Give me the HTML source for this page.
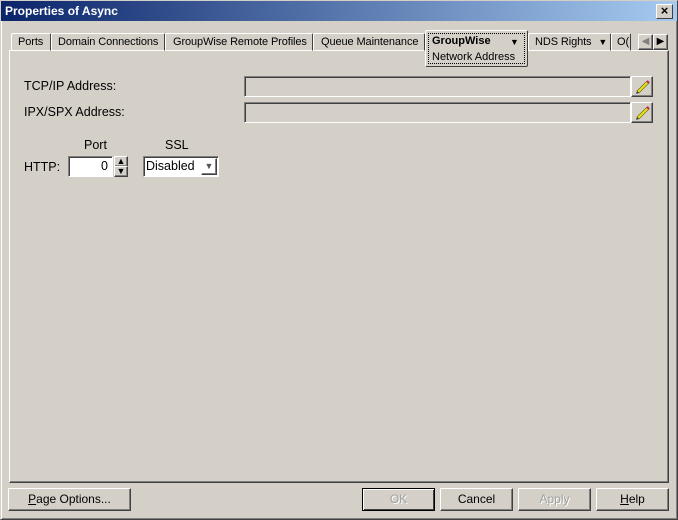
<!DOCTYPE html>
<html><head><style>
*{box-sizing:border-box;margin:0;padding:0}
body{width:678px;height:520px;background:#d4d0c8;font-family:"Liberation Sans",sans-serif;font-size:12px;color:#000;position:relative;overflow:hidden}
.a{position:absolute}
.win{left:0;top:0;width:678px;height:520px;border:1px solid;border-color:#d4d0c8 #404040 #404040 #d4d0c8;box-shadow:inset 1px 1px #fff,inset -1px -1px #808080}
.title{left:1px;top:1px;width:676px;height:20px;background:linear-gradient(to right,#0a246a,#a6caf0);color:#fff;font-weight:bold;font-size:12px;line-height:20px;padding-left:4px}
.close{left:656px;top:4px;width:17px;height:15px;background:#d4d0c8;border:1px solid;border-color:#fff #404040 #404040 #fff;font-size:13px;line-height:12px;text-align:center;color:#000;font-weight:bold}
.tab{top:33px;height:18px;border:1px solid;border-color:#fff #404040 transparent #fff;border-radius:2px 2px 0 0;line-height:16px;padding-left:6px;white-space:nowrap;overflow:hidden;font-size:11px;letter-spacing:-0.1px}
.panel{left:9px;top:50px;width:660px;height:433px;border:1px solid;border-color:#fff #404040 #404040 #fff;box-shadow:inset -1px -1px #808080}
.fld{border:1px solid;border-color:#808080 #fff #fff #808080;box-shadow:inset 1px 1px #404040}
.btn{border:1px solid;border-color:#fff #404040 #404040 #fff;box-shadow:inset -1px -1px #808080;text-align:center;line-height:20px;font-size:12px}
.dis{color:#a0a0a0;text-shadow:1px 1px #fff}
</style></head><body>
<div class="a win"></div>
<div class="a title">Properties of Async</div>
<div class="a close">×</div>

<div class="a panel"></div>
<div class="a tab" style="left:11px;width:40px">Ports</div>
<div class="a tab" style="left:51px;width:114px;padding-left:6px">Domain Connections</div>
<div class="a tab" style="left:165px;width:148px;padding-left:7px">GroupWise Remote Profiles</div>
<div class="a tab" style="left:313px;width:112px;padding-left:7px">Queue Maintenance</div>
<div class="a tab" style="left:528px;width:83px">NDS Rights <span style="font-size:9px;margin-left:4px">▼</span></div>
<div class="a tab" style="left:611px;width:20px;padding-left:5px">O(</div>
<div class="a" style="left:425px;top:30px;width:103px;height:37px;background:#d4d0c8;border:1px solid;border-color:#fff #404040 #404040 #fff;border-radius:2px"></div>
<div class="a" style="left:428px;top:33px;width:97px;height:31px;border:1px dotted #000"></div>
<div class="a" style="left:432px;top:35px;font-weight:bold;font-size:11px">GroupWise</div>
<div class="a" style="left:510px;top:37px;font-size:9px">▼</div>
<div class="a" style="left:432px;top:51px;font-size:11px">Network Address</div>
<div class="a btn" style="left:638px;top:34px;width:15px;height:16px;line-height:13px;font-size:10px;color:#808080">◀</div>
<div class="a btn" style="left:653px;top:34px;width:15px;height:16px;line-height:13px;font-size:10px">▶</div>

<div class="a" style="left:24px;top:79px;font-size:12.5px">TCP/IP Address:</div>
<div class="a fld" style="left:244px;top:76px;width:387px;height:21px"></div>
<div class="a btn" style="left:631px;top:76px;width:22px;height:21px"></div>
<svg class="a" style="left:634px;top:78px" width="16" height="16"><path d="M3 13 L13 3 L15 5 L5 15Z" fill="#e8e020" stroke="#606000" stroke-width=".6"/><path d="M13 3 L15 5" stroke="#c02060" stroke-width="2"/><path d="M3 13 L2 16 L5 15Z" fill="#404040"/></svg>
<div class="a" style="left:24px;top:105px;font-size:12.5px">IPX/SPX Address:</div>
<div class="a fld" style="left:244px;top:102px;width:387px;height:21px"></div>
<div class="a btn" style="left:631px;top:102px;width:22px;height:21px"></div>
<svg class="a" style="left:634px;top:104px" width="16" height="16"><path d="M3 13 L13 3 L15 5 L5 15Z" fill="#e8e020" stroke="#606000" stroke-width=".6"/><path d="M13 3 L15 5" stroke="#c02060" stroke-width="2"/><path d="M3 13 L2 16 L5 15Z" fill="#404040"/></svg>

<div class="a" style="left:84px;top:138px;font-size:12.5px">Port</div>
<div class="a" style="left:165px;top:138px;font-size:12.5px">SSL</div>
<div class="a" style="left:24px;top:160px;font-size:12.5px">HTTP:</div>
<div class="a fld" style="left:68px;top:156px;width:45px;height:21px;background:#fff;text-align:right;padding-right:4px;line-height:19px;font-size:12.5px">0</div>
<div class="a btn" style="left:114px;top:156px;width:14px;height:11px;line-height:9px;font-size:9px">▲</div>
<div class="a btn" style="left:114px;top:166px;width:14px;height:11px;line-height:9px;font-size:9px">▼</div>
<div class="a fld" style="left:143px;top:156px;width:76px;height:21px;background:#fff;padding-left:2px;line-height:19px;font-size:12.5px">Disabled</div>
<div class="a btn" style="left:201px;top:158px;width:16px;height:17px;line-height:14px;font-size:9px;color:#555">▼</div>

<div class="a btn" style="left:8px;top:488px;width:123px;height:23px"><u>P</u>age Options...</div>
<div class="a btn dis" style="left:362px;top:488px;width:73px;height:23px;border-color:#000;box-shadow:inset 1px 1px #fff,inset -1px -1px #404040">OK</div>
<div class="a btn" style="left:440px;top:488px;width:73px;height:23px">Cancel</div>
<div class="a btn dis" style="left:518px;top:488px;width:73px;height:23px">Apply</div>
<div class="a btn" style="left:596px;top:488px;width:73px;height:23px"><u>H</u>elp</div>
</body></html>
